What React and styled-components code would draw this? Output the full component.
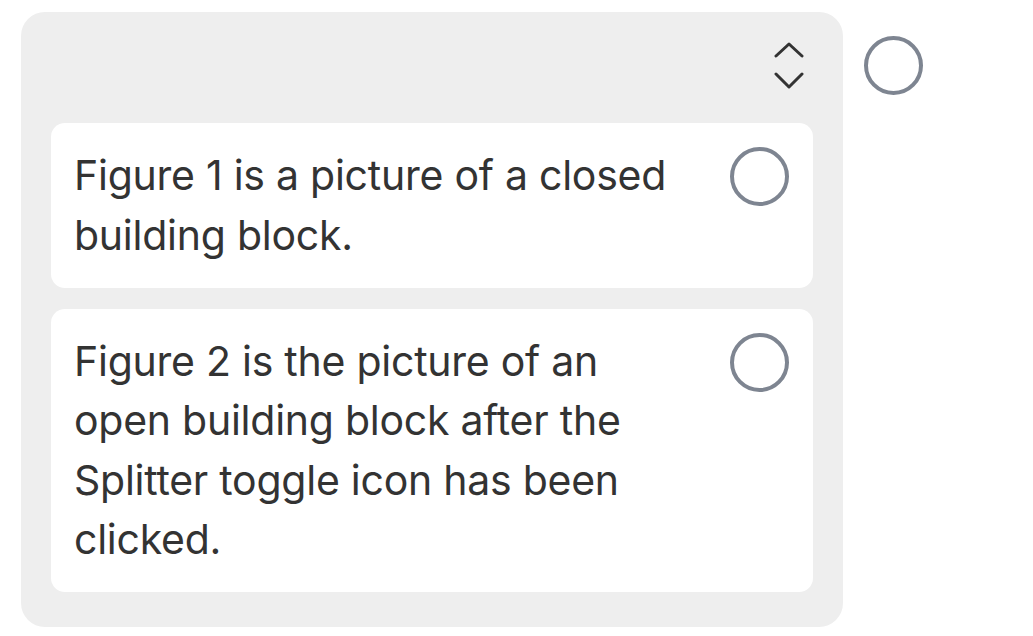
import styled, { createGlobalStyle } from "styled-components";

const items = [
  { id: 1, text: "Figure 1 is a picture of a closed building block." },
  {
    id: 2,
    text: "Figure 2 is the picture of an open building block after the Splitter toggle icon has been clicked.",
  },
];

const App = () => {
  return (
    <>
      <GlobalStyle />
      <Page>
        <Panel>
          <Header>
            <SortButton aria-label="Reorder">
              <svg width="32" height="48" viewBox="0 0 32 48" fill="none">
                <path
                  d="M3 14 L16 2 L29 14 M3 32 L16 45 L29 32"
                  stroke="#333333"
                  strokeWidth="3"
                  strokeLinecap="round"
                  strokeLinejoin="round"
                />
              </svg>
            </SortButton>
          </Header>
          <List>
            {items.map((item) => (
              <Card key={item.id}>
                <Statement>{item.text}</Statement>
                <Radio />
              </Card>
            ))}
          </List>
        </Panel>
        <Radio $outer />
      </Page>
    </>
  );
};

const GlobalStyle = createGlobalStyle`
  body {
    margin: 0;
    background: #ffffff;
    font-family: Inter, "Noto Sans", sans-serif;
  }
`;

const Page = styled.div`
  display: flex;
  align-items: flex-start;
  gap: 21px;
  padding: 12px 0 0 21px;
`;

const Panel = styled.div`
  width: 822px;
  box-sizing: border-box;
  padding: 30px 30px 35px 30px;
  background: #eeeeee;
  border-radius: 24px;
`;

const Header = styled.div`
  display: flex;
  justify-content: flex-end;
  height: 48px;
  margin-bottom: 33px;
`;

const SortButton = styled.button`
  width: 48px;
  height: 48px;
  padding: 0;
  border: none;
  background: none;
  display: flex;
  align-items: center;
  justify-content: center;
  cursor: pointer;
`;

const List = styled.div`
  display: flex;
  flex-direction: column;
  gap: 21px;
`;

const Card = styled.div`
  display: flex;
  align-items: flex-start;
  justify-content: space-between;
  padding: 23px 24px 22.5px 23px;
  background: #ffffff;
  border-radius: 14px;
`;

const Statement = styled.p`
  margin: 0;
  width: 618px;
  font-size: 41px;
  line-height: 59.5px;
  letter-spacing: -0.25px;
  color: #333333;
`;

const Radio = styled.span`
  flex: none;
  width: 59px;
  height: 59px;
  box-sizing: border-box;
  margin-top: ${(p) => (p.$outer ? "24px" : "1px")};
  border: 4px solid #7e8591;
  border-radius: 50%;
`;

export default App;
